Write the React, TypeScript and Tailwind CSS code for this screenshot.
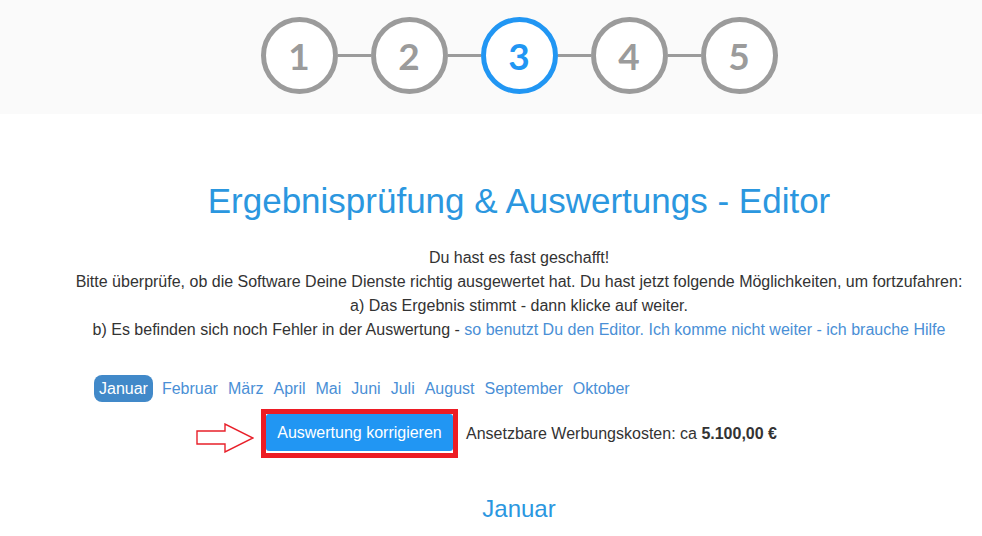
import type { ReactNode } from "react";

const STEPS = [1, 2, 3, 4, 5];
const ACTIVE_STEP = 3;

const MONTHS = [
  "Januar",
  "Februar",
  "März",
  "April",
  "Mai",
  "Juni",
  "Juli",
  "August",
  "September",
  "Oktober",
];

function StepCircle({ n, active }: { n: number; active: boolean }) {
  return (
    <div
      className={`grid size-[77px] shrink-0 place-items-center rounded-full border-[5px] bg-white ${
        active ? "border-[#2196f3] text-[#2196f3]" : "border-[#9b9b9b] text-[#9b9b9b]"
      }`}
    >
      <span className="font-['Lato',sans-serif] text-[37px] font-bold leading-none">{n}</span>
    </div>
  );
}

function Stepper() {
  return (
    <header className="h-[114px] bg-[#fafafa] pl-[56px]">
      <div className="flex items-center justify-center pt-[17px]">
        {STEPS.map((n, i) => (
          <div key={n} className="flex items-center">
            {i > 0 && <span className="h-[3px] w-[33px] bg-[#9b9b9b]" />}
            <StepCircle n={n} active={n === ACTIVE_STEP} />
          </div>
        ))}
      </div>
    </header>
  );
}

function TextLink({ children }: { children: ReactNode }) {
  return <a className="cursor-pointer text-[#4a8fd6]">{children}</a>;
}

function HintArrow() {
  return (
    <svg
      className="absolute left-[-70px] top-[9px]"
      width="58"
      height="30"
      viewBox="0 0 58 30"
      fill="none"
    >
      <polygon
        points="1,8 29,8 29,1 57,15 29,29 29,21 1,21"
        fill="#fff"
        stroke="#e8202a"
        strokeWidth="1.4"
      />
    </svg>
  );
}

function MonthTabs({ active }: { active: string }) {
  return (
    <nav className="ml-[38px] mt-[33px] flex items-center">
      {MONTHS.map((m) =>
        m === active ? (
          <span
            key={m}
            className="mr-[4px] flex h-[27px] items-center rounded-[8px] bg-[#4189c9] px-[5px] text-white"
          >
            {m}
          </span>
        ) : (
          <a
            key={m}
            className="flex h-[27px] cursor-pointer items-center px-[5px] text-[#4a8fd6]"
          >
            {m}
          </a>
        )
      )}
    </nav>
  );
}

export default function App() {
  return (
    <div className="min-h-[536px] bg-white font-['Liberation_Sans',Arial,sans-serif] text-[16px] text-[#333]">
      <Stepper />

      <main className="pl-[56px]">
        <h1 className="mt-[67px] text-center text-[35px] leading-[40px] text-[#2b97df]">
          Ergebnisprüfung &amp; Auswertungs - Editor
        </h1>

        <div className="mt-[25px] text-center leading-[24px]">
          <p>Du hast es fast geschafft!</p>
          <p>
            Bitte überprüfe, ob die Software Deine Dienste richtig ausgewertet hat. Du hast
            jetzt folgende Möglichkeiten, um fortzufahren:
          </p>
          <p>a) Das Ergebnis stimmt - dann klicke auf weiter.</p>
          <p>
            b) Es befinden sich noch Fehler in der Auswertung -{" "}
            <TextLink>so benutzt Du den Editor.</TextLink>{" "}
            <TextLink>Ich komme nicht weiter - ich brauche Hilfe</TextLink>
          </p>
        </div>

        <MonthTabs active="Januar" />

        <div className="mt-[7px] flex items-center justify-center gap-[8px]">
          <div className="relative border-[5px] border-[#ed1c24] bg-white pb-[2px]">
            <HintArrow />
            <button className="flex h-[37px] w-[187px] items-center justify-center rounded-[3px] bg-[#2196f3] text-white">
              Auswertung korrigieren
            </button>
          </div>
          <p>
            Ansetzbare Werbungskosten: ca <b>5.100,00 €</b>
          </p>
        </div>

        <h2 className="mt-[35px] text-center text-[24px] leading-[32px] text-[#2b97df]">
          Januar
        </h2>
      </main>
    </div>
  );
}
